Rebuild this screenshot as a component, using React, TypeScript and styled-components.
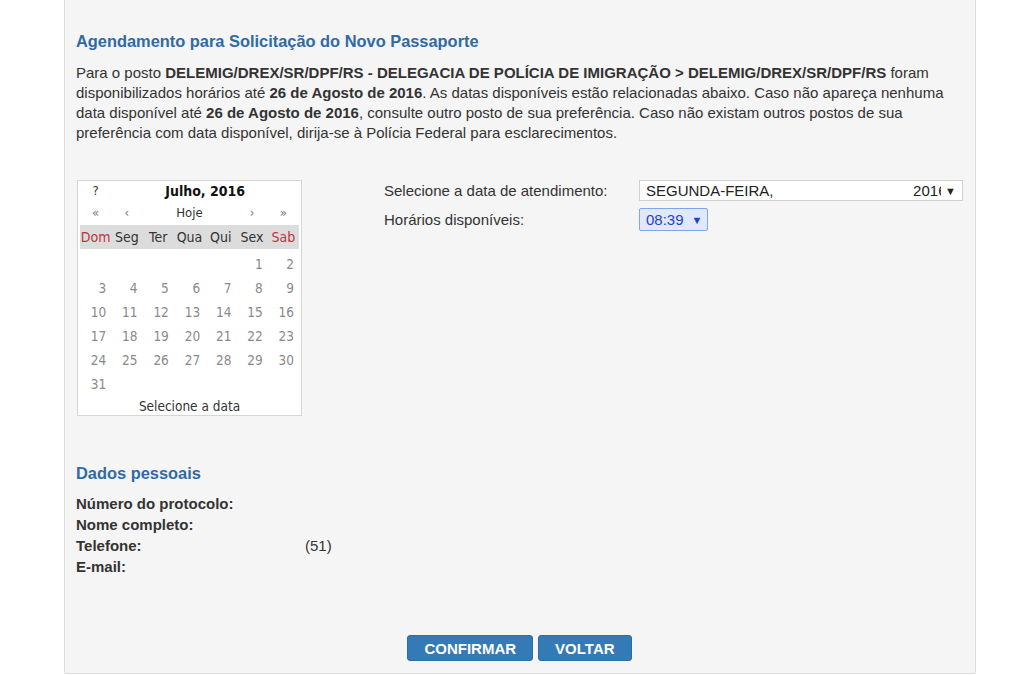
import styled, { createGlobalStyle } from 'styled-components'

const GlobalStyle = createGlobalStyle`
  html, body {
    margin: 0;
    padding: 0;
    background: #ffffff;
  }
  body {
    font-family: "Liberation Sans", Arial, sans-serif;
    color: #333333;
  }
`

const Page = styled.div`
  width: 1024px;
  height: 675px;
  overflow: hidden;
  background: #ffffff;
`

const Panel = styled.div`
  margin-left: 64px;
  width: 912px;
  height: 674px;
  box-sizing: border-box;
  background: #f5f5f5;
  border: 1px solid #dcdcdc;
  border-top: none;
  border-radius: 0 0 3px 3px;
  padding: 32px 12px 0 11px;
  display: flex;
  flex-direction: column;
`

const SectionTitle = styled.h2<{ $gap?: number }>`
  margin: ${(p) => p.$gap ?? 0}px 0 0 0;
  font-size: 16.4px;
  line-height: 18px;
  font-weight: bold;
  color: #2f6aa6;
`

const Intro = styled.p`
  margin: 13px 0 0 0;
  font-size: 15px;
  line-height: 20px;
  color: #333;
  width: 880px;
`

const Middle = styled.div`
  display: flex;
  margin-top: 37px;
`

const Calendar = styled.table`
  width: 225px;
  border: 1px solid #d6d6d6;
  background: #ffffff;
  border-collapse: separate;
  border-spacing: 0;
  padding: 0 2px;
  font-family: "DejaVu Sans Condensed", "DejaVu Sans", Tahoma, sans-serif;
  font-size: 13px;
  table-layout: fixed;
  margin-left: 1px;
`

const TitleRow = styled.tr`
  height: 20px;
`

const NavRow = styled.tr`
  height: 24px;
`

const Cell = styled.td<{ $color?: string; $bold?: boolean }>`
  padding: 0;
  text-align: center;
  color: ${(p) => p.$color ?? '#333'};
  font-weight: ${(p) => (p.$bold ? 'bold' : 'normal')};
  font-size: ${(p) => (p.$bold ? '14px' : '13px')};
  line-height: 18px;
`

const DayNameRow = styled.tr`
  height: 24px;
  background: #dcdcdc;
`

const DayName = styled.th<{ $weekend?: boolean }>`
  font-weight: normal;
  font-size: 14px;
  color: ${(p) => (p.$weekend ? '#c0333c' : '#333')};
  padding: 0;
`

const DateRow = styled.tr`
  height: 24px;
`

const DateCell = styled.td`
  text-align: right;
  padding: 6px 5px 0 0;
  line-height: 18px;
  color: #8a8a8a;
  font-size: 13.5px;
`

const Footer = styled.td`
  text-align: center;
  padding: 4px 0 0 0;
  height: 18px;
  line-height: 18px;
  color: #333;
  font-size: 13.5px;
`

const Form = styled.div`
  margin-left: 82px;
  display: grid;
  grid-template-columns: 255px auto;
  row-gap: 7px;
  align-items: center;
  align-self: flex-start;
`

const Label = styled.span`
  font-size: 15px;
  color: #333;
`

const DateSelect = styled.div`
  width: 324px;
  height: 21px;
  box-sizing: border-box;
  border: 1px solid #cfcfcf;
  background: #ffffff;
  display: flex;
  align-items: center;
  padding: 0 6px;
  font-size: 15px;
  color: #222;
`

const Grow = styled.span`
  flex: 1;
`

const Clip = styled.span`
  width: 28px;
  overflow: hidden;
  white-space: nowrap;
`

const Arrow = styled.span<{ $color?: string }>`
  font-size: 11px;
  margin-left: 4px;
  color: ${(p) => p.$color ?? '#222'};
`

const TimeSelect = styled.div`
  width: 69px;
  height: 23px;
  box-sizing: border-box;
  border: 1px solid #7fa6e6;
  border-radius: 2px;
  background: #dfe9fb;
  display: flex;
  align-items: center;
  gap: 4px;
  padding: 0 6px;
  font-size: 15px;
  color: #1f3fd6;
`

const DataGrid = styled.div`
  margin-top: 11px;
  display: grid;
  grid-template-columns: 229px auto;
  font-size: 15px;
  line-height: 21px;
`

const DataLabel = styled.span`
  font-weight: bold;
  color: #333;
`

const DataValue = styled.span`
  color: #333;
`

const Buttons = styled.div`
  margin-top: 58px;
  display: flex;
  justify-content: center;
  gap: 5px;
`

const Button = styled.button`
  height: 26px;
  padding: 0 16px;
  background: #337ab7;
  color: #ffffff;
  border: 1px solid #2e6da4;
  border-radius: 3px;
  font-family: "Liberation Sans", Arial, sans-serif;
  font-weight: bold;
  font-size: 15px;
  cursor: pointer;
`

const weeks: (number | null)[][] = [
  [null, null, null, null, null, 1, 2],
  [3, 4, 5, 6, 7, 8, 9],
  [10, 11, 12, 13, 14, 15, 16],
  [17, 18, 19, 20, 21, 22, 23],
  [24, 25, 26, 27, 28, 29, 30],
  [31, null, null, null, null, null, null],
]

const dayNames = ['Dom', 'Seg', 'Ter', 'Qua', 'Qui', 'Sex', 'Sab']

const App = () => {
  return (
    <Page>
      <GlobalStyle />
      <Panel>
        <SectionTitle>Agendamento para Solicitação do Novo Passaporte</SectionTitle>
        <Intro>
          Para o posto <b>DELEMIG/DREX/SR/DPF/RS - DELEGACIA DE POLÍCIA DE IMIGRAÇÃO &gt; DELEMIG/DREX/SR/DPF/RS</b>{' '}
          foram disponibilizados horários até <b>26 de Agosto de 2016</b>. As datas disponíveis estão relacionadas
          abaixo. Caso não apareça nenhuma data disponível até <b>26 de Agosto de 2016</b>, consulte outro posto de sua
          preferência. Caso não existam outros postos de sua preferência com data disponível, dirija-se à Polícia
          Federal para esclarecimentos.
        </Intro>

        <Middle>
          <Calendar>
            <thead>
              <TitleRow>
                <Cell>?</Cell>
                <Cell colSpan={6} $bold $color="#111">
                  Julho, 2016
                </Cell>
              </TitleRow>
              <NavRow>
                <Cell $color="#777">«</Cell>
                <Cell $color="#777">‹</Cell>
                <Cell colSpan={3}>Hoje</Cell>
                <Cell $color="#777">›</Cell>
                <Cell $color="#777">»</Cell>
              </NavRow>
              <DayNameRow>
                {dayNames.map((d, i) => (
                  <DayName key={d} $weekend={i === 0 || i === 6}>
                    {d}
                  </DayName>
                ))}
              </DayNameRow>
            </thead>
            <tbody>
              {weeks.map((week, wi) => (
                <DateRow key={wi}>
                  {week.map((day, di) => (
                    <DateCell key={di}>{day ?? ''}</DateCell>
                  ))}
                </DateRow>
              ))}
              <tr>
                <Footer colSpan={7}>Selecione a data</Footer>
              </tr>
            </tbody>
          </Calendar>

          <Form>
            <Label>Selecione a data de atendimento:</Label>
            <DateSelect>
              <Grow>SEGUNDA-FEIRA,</Grow>
              <Clip>2016</Clip>
              <Arrow>▼</Arrow>
            </DateSelect>
            <Label>Horários disponíveis:</Label>
            <TimeSelect>
              08:39
              <Arrow $color="#1f3fd6">▼</Arrow>
            </TimeSelect>
          </Form>
        </Middle>

        <SectionTitle $gap={48}>Dados pessoais</SectionTitle>
        <DataGrid>
          <DataLabel>Número do protocolo:</DataLabel>
          <DataValue />
          <DataLabel>Nome completo:</DataLabel>
          <DataValue />
          <DataLabel>Telefone:</DataLabel>
          <DataValue>(51)</DataValue>
          <DataLabel>E-mail:</DataLabel>
          <DataValue />
        </DataGrid>

        <Buttons>
          <Button>CONFIRMAR</Button>
          <Button>VOLTAR</Button>
        </Buttons>
      </Panel>
    </Page>
  )
}

export default App
